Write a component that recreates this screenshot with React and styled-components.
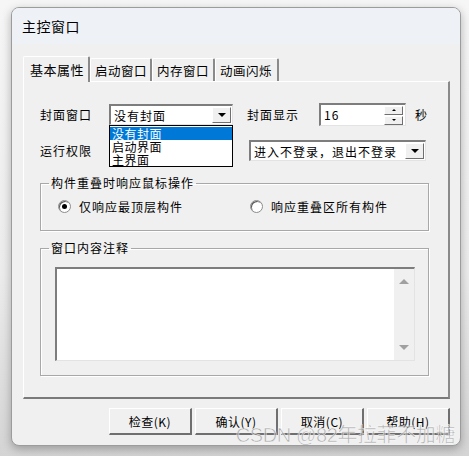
import React from "react";
import styled, { createGlobalStyle } from "styled-components";

const GlobalStyle = createGlobalStyle`
  body {
    margin: 0;
    background: #ffffff;
    font-family: "Noto Sans CJK SC", "Noto Sans", sans-serif;
    color: #000;
  }
`;

const Page = styled.div`
  padding: 7px 0 0 11px;
  height: 456px;
  box-sizing: border-box;
  background: linear-gradient(180deg, #f6f6f6 0%, #ececec 60%, #d4d4d4 100%);
  overflow: hidden;
`;

const Window = styled.div`
  position: relative;
  width: 450px;
  height: 439px;
  box-sizing: border-box;
  border: 1px solid #9c9c9c;
  border-radius: 8px;
  background: #f0f0f0;
  box-shadow: 0 3px 10px rgba(0, 0, 0, 0.28);
  overflow: hidden;
`;

const TitleBar = styled.div`
  height: 36px;
  display: flex;
  align-items: center;
  padding-left: 10px;
  background: #eef2f7;
  font-size: 14px;
  letter-spacing: 0.5px;
`;

const Body = styled.div`
  padding: 12px 10px 0 11px;
`;

const TabRow = styled.div`
  display: flex;
  align-items: flex-end;
  height: 26px;
  position: relative;
  z-index: 1;
`;

const Tab = styled.div`
  box-sizing: border-box;
  height: ${(p) => (p.$active ? "26px" : "23px")};
  margin-bottom: ${(p) => (p.$active ? "0" : "1px")};
  width: ${(p) => p.$w}px;
  padding-top: ${(p) => (p.$active ? "3px" : "2px")};
  padding-left: ${(p) => (p.$active ? "6px" : "4px")};
  font-size: ${(p) => (p.$active ? "13px" : "12.5px")};
  letter-spacing: 0.5px;
  background: #f0f0f0;
  border-top: 1px solid #ffffff;
  border-left: 1px solid #ffffff;
  border-right: 2px solid #8a8a8a;
  border-top-left-radius: 2px;
  border-top-right-radius: 2px;
  white-space: nowrap;
`;

const Panel = styled.div`
  position: relative;
  margin-top: -1px;
  width: 427px;
  height: 318px;
  box-sizing: border-box;
  border-top: 1px solid #ffffff;
  border-left: 1px solid #ffffff;
  border-right: 2px solid #8a8a8a;
  border-bottom: 2px solid #7a7a7a;
  padding: 22px 0 0 16px;
  font-size: 12px;
  letter-spacing: 1px;
`;

const Row = styled.div`
  display: flex;
  align-items: center;
  height: ${(p) => p.$h}px;
  margin-bottom: ${(p) => p.$mb || 0}px;
`;

const Label = styled.span`
  width: ${(p) => p.$w}px;
  margin-left: ${(p) => p.$ml || 0}px;
  flex: none;
  white-space: nowrap;
`;

const Sunken = styled.div`
  position: relative;
  box-sizing: border-box;
  flex: none;
  width: ${(p) => p.$w}px;
  height: ${(p) => p.$h}px;
  margin-left: ${(p) => p.$ml || 0}px;
  background: #ffffff;
  border-top: 2px solid #7d7d7d;
  border-left: 2px solid #7d7d7d;
  border-right: 1px solid #e3e3e3;
  border-bottom: 1px solid #e3e3e3;
  display: flex;
  align-items: ${(p) => (p.$top ? "flex-start" : "center")};
  padding-left: 3px;
`;

const ComboText = styled.span`
  flex: 1;
  white-space: nowrap;
  overflow: hidden;
  padding-top: ${(p) => p.$pt || 0}px;
`;

const RaisedBtn = styled.div`
  box-sizing: border-box;
  flex: none;
  width: ${(p) => p.$w}px;
  height: ${(p) => p.$h}px;
  background: #f0f0f0;
  border-top: 1px solid #ffffff;
  border-left: 1px solid #ffffff;
  border-right: 1px solid #6f6f6f;
  border-bottom: 1px solid #6f6f6f;
  display: flex;
  align-items: center;
  justify-content: center;
  margin-right: 1px;
`;

const Arrow = styled.span`
  width: 0;
  height: 0;
  border-left: ${(p) => p.$s}px solid transparent;
  border-right: ${(p) => p.$s}px solid transparent;
  ${(p) =>
    p.$up
      ? `border-bottom: ${p.$s}px solid ${p.$c || "#000"};`
      : `border-top: ${p.$s}px solid ${p.$c || "#000"};`}
`;

const DropList = styled.div`
  position: absolute;
  left: -2px;
  top: 19px;
  width: 124px;
  box-sizing: border-box;
  border: 1px solid #000;
  background: #fff;
  z-index: 5;
  padding: 1px 0 0;
`;

const DropItem = styled.div`
  height: 13px;
  line-height: 13px;
  padding-left: 2px;
  font-size: 12px;
  letter-spacing: 0.5px;
  background: ${(p) => (p.$sel ? "#0078d7" : "transparent")};
  color: ${(p) => (p.$sel ? "#fff" : "#000")};
`;

const SpinCol = styled.div`
  display: flex;
  flex-direction: column;
  gap: 1px;
  margin-left: auto;
  margin-right: 1px;
  align-self: center;
`;

const Group = styled.fieldset`
  margin: ${(p) => p.$mt || 0}px 0 0;
  width: 389px;
  box-sizing: border-box;
  height: ${(p) => p.$h}px;
  border: 1px solid #a8a8a8;
  box-shadow: inset 1px 1px 0 #ffffff, 1px 1px 0 #ffffff;
  padding: 0;
`;

const Legend = styled.legend`
  margin-left: 8px;
  padding: 0 2px;
  font-size: 12px;
  line-height: 14px;
  letter-spacing: 1px;
`;

const GroupInner = styled.div`
  padding: ${(p) => p.$pad};
`;

const RadioRow = styled.div`
  display: flex;
  align-items: center;
  height: 16px;
`;

const RadioItem = styled.label`
  display: flex;
  align-items: center;
  width: ${(p) => p.$w}px;
  flex: none;
`;

const RadioDot = styled.span`
  width: 13px;
  height: 13px;
  box-sizing: border-box;
  border-radius: 50%;
  background: #fff;
  border: 1px solid #8c8c8c;
  box-shadow: inset 1px 1px 0 #5a5a5a;
  margin-right: 8px;
  display: flex;
  align-items: center;
  justify-content: center;
  &::after {
    content: "";
    width: 5px;
    height: 5px;
    border-radius: 50%;
    background: ${(p) => (p.$on ? "#000" : "transparent")};
  }
`;

const Memo = styled.div`
  box-sizing: border-box;
  width: 360px;
  height: 94px;
  background: #fff;
  border-top: 2px solid #7d7d7d;
  border-left: 2px solid #7d7d7d;
  border-right: 1px solid #e3e3e3;
  border-bottom: 1px solid #e3e3e3;
  display: flex;
  justify-content: flex-end;
`;

const ScrollBar = styled.div`
  width: 20px;
  background: #f0f0f0;
  display: flex;
  flex-direction: column;
  justify-content: space-between;
  align-items: center;
  padding: 10px 0 10px;
`;

const Buttons = styled.div`
  display: flex;
  justify-content: flex-end;
  gap: 3px;
  margin-top: 9px;
  width: 427px;
`;

const Button = styled.button`
  width: 83px;
  height: 27px;
  box-sizing: border-box;
  background: #f0f0f0;
  border-top: 1px solid #ffffff;
  border-left: 1px solid #ffffff;
  border-right: 2px solid #6f6f6f;
  border-bottom: 2px solid #6f6f6f;
  border-radius: 0;
  font-family: "Noto Sans CJK SC", "Noto Sans", sans-serif;
  font-size: 12px;
  letter-spacing: 0.5px;
  padding: 0;
  color: #000;
`;

const Watermark = styled.div`
  position: absolute;
  right: 5px;
  bottom: -3px;
  font-family: "Liberation Sans", "Noto Sans CJK SC", sans-serif;
  font-size: 20px;
  letter-spacing: -0.4px;
  color: rgba(135, 135, 135, 0.6);
  -webkit-text-stroke: 0.5px rgba(255, 255, 255, 0.9);
  pointer-events: none;
  white-space: nowrap;
`;

const tabs = [
  { name: "基本属性", w: 67, active: true },
  { name: "启动窗口", w: 62 },
  { name: "内存窗口", w: 63 },
  { name: "动画闪烁", w: 64 },
];

export default function App() {
  return (
    <>
      <GlobalStyle />
      <Page>
        <Window>
          <TitleBar>主控窗口</TitleBar>
          <Body>
            <TabRow>
              {tabs.map((t) => (
                <Tab key={t.name} $w={t.w} $active={t.active}>
                  {t.name}
                </Tab>
              ))}
            </TabRow>
            <Panel>
              <Row $h={21} $mb={15}>
                <Label $w={69}>封面窗口</Label>
                <Sunken $w={124} $h={21}>
                  <ComboText>没有封面</ComboText>
                  <RaisedBtn $w={19} $h={16}>
                    <Arrow $s={4} />
                  </RaisedBtn>
                  <DropList>
                    <DropItem $sel>没有封面</DropItem>
                    <DropItem>启动界面</DropItem>
                    <DropItem>主界面</DropItem>
                  </DropList>
                </Sunken>
                <Label $w={72} $ml={14}>
                  封面显示
                </Label>
                <Sunken $w={87} $h={23} $top>
                  <ComboText $pt={1}>16</ComboText>
                  <SpinCol>
                    <RaisedBtn $w={19} $h={9}>
                      <Arrow $s={2} $up />
                    </RaisedBtn>
                    <RaisedBtn $w={19} $h={9}>
                      <Arrow $s={2} />
                    </RaisedBtn>
                  </SpinCol>
                </Sunken>
                <Label $w={20} $ml={9}>
                  秒
                </Label>
              </Row>
              <Row $h={21} $mb={15}>
                <Label $w={56}>运行权限</Label>
                <Sunken $w={177} $h={21} $ml={153}>
                  <ComboText>进入不登录，退出不登录</ComboText>
                  <RaisedBtn $w={19} $h={16}>
                    <Arrow $s={4} />
                  </RaisedBtn>
                </Sunken>
              </Row>
              <Group $h={55}>
                <Legend>构件重叠时响应鼠标操作</Legend>
                <GroupInner $pad="8px 0 0 17px">
                  <RadioRow>
                    <RadioItem $w={192}>
                      <RadioDot $on />
                      仅响应最顶层构件
                    </RadioItem>
                    <RadioItem $w={160}>
                      <RadioDot />
                      响应重叠区所有构件
                    </RadioItem>
                  </RadioRow>
                </GroupInner>
              </Group>
              <Group $h={135} $mt={10}>
                <Legend>窗口内容注释</Legend>
                <GroupInner $pad="12px 0 0 14px">
                  <Memo>
                    <ScrollBar>
                      <Arrow $s={5} $up $c="#a0a0a0" />
                      <Arrow $s={5} $c="#a0a0a0" />
                    </ScrollBar>
                  </Memo>
                </GroupInner>
              </Group>
            </Panel>
            <Buttons>
              <Button>检查(K)</Button>
              <Button>确认(Y)</Button>
              <Button>取消(C)</Button>
              <Button>帮助(H)</Button>
            </Buttons>
          </Body>
          <Watermark>CSDN @82年拉菲不加糖</Watermark>
        </Window>
      </Page>
    </>
  );
}
